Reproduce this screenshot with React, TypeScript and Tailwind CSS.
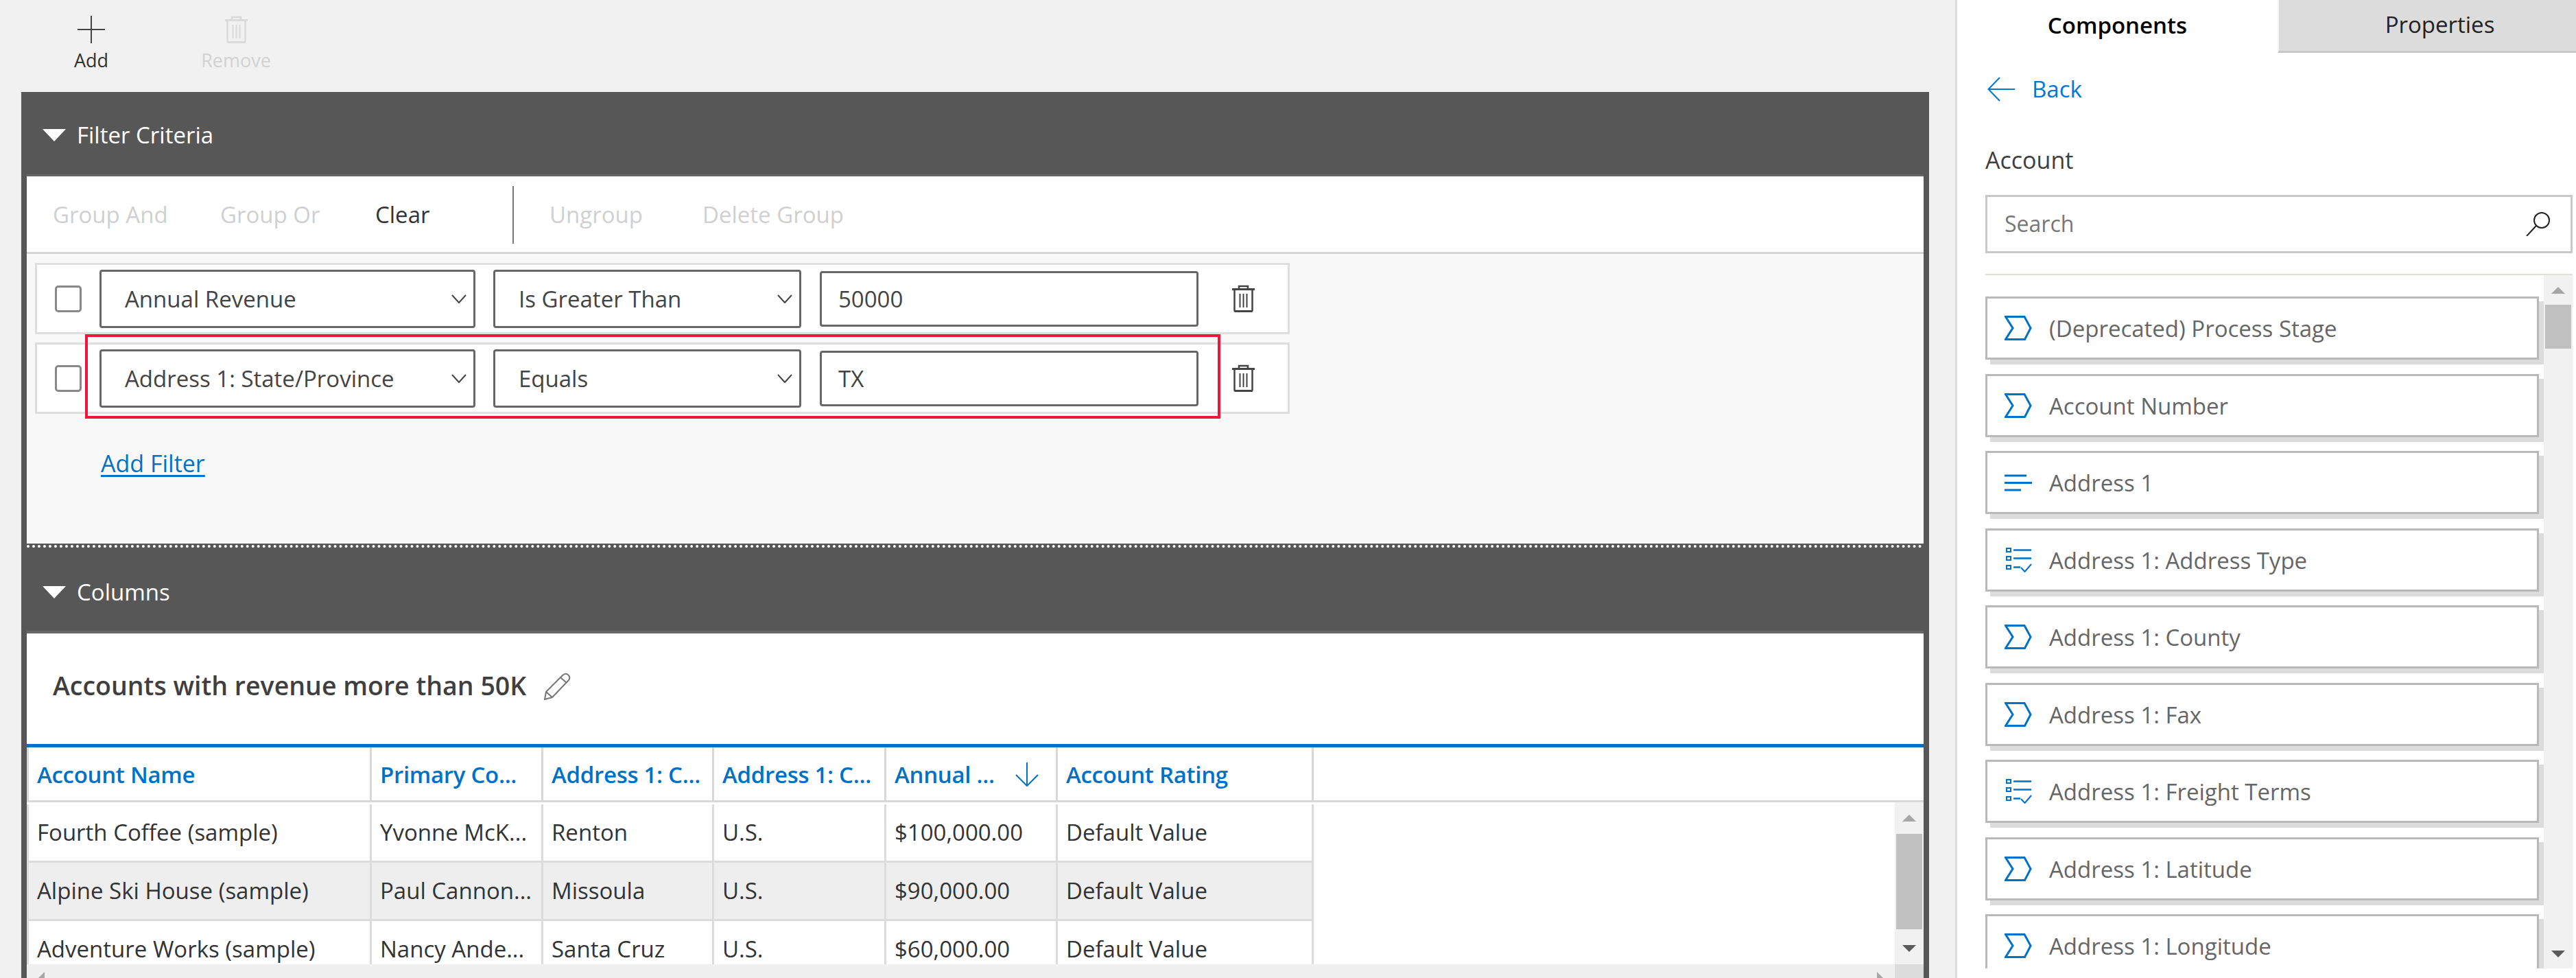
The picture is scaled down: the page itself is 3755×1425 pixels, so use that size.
import { ReactNode } from 'react';

const columns = [
  { label: 'Account Name', width: 'w-[500px]' },
  { label: 'Primary Co...', width: 'w-[250px]' },
  { label: 'Address 1: C...', width: 'w-[249px]' },
  { label: 'Address 1: C...', width: 'w-[251px]' },
  { label: 'Annual ...', width: 'w-[250px]', sorted: true },
  { label: 'Account Rating', width: 'w-[373px]' },
];

const rows = [
  ['Fourth Coffee (sample)', 'Yvonne McK...', 'Renton', 'U.S.', '$100,000.00', 'Default Value'],
  ['Alpine Ski House (sample)', 'Paul Cannon...', 'Missoula', 'U.S.', '$90,000.00', 'Default Value'],
  ['Adventure Works (sample)', 'Nancy Ande...', 'Santa Cruz', 'U.S.', '$60,000.00', 'Default Value'],
];

const fields = [
  { label: '(Deprecated) Process Stage', icon: 'field' },
  { label: 'Account Number', icon: 'field' },
  { label: 'Address 1', icon: 'text' },
  { label: 'Address 1: Address Type', icon: 'option' },
  { label: 'Address 1: County', icon: 'field' },
  { label: 'Address 1: Fax', icon: 'field' },
  { label: 'Address 1: Freight Terms', icon: 'option' },
  { label: 'Address 1: Latitude', icon: 'field' },
  { label: 'Address 1: Longitude', icon: 'field' },
];

function TrashIcon({ color }: { color: string }) {
  return (
    <svg width="33" height="40" viewBox="0 0 33 40" fill="none" stroke={color} strokeWidth="2.5">
      <path d="M10 6V2h13v4" />
      <path d="M0 6.5h33" strokeWidth="3" />
      <path d="M3.5 6.5V37q0 1.5 1.5 1.5h23q1.5 0 1.5-1.5V6.5" />
      <path d="M3.5 38.5h26" strokeWidth="3" />
      <path d="M11.5 13v20M16.500 13v20M21.500 13v20" strokeWidth="2" />
    </svg>
  );
}

function Triangle({ up, color, w = 20, h = 10 }: { up?: boolean; color: string; w?: number; h?: number }) {
  return (
    <svg width={w} height={h} viewBox="0 0 20 10" preserveAspectRatio="none" fill={color}>
      <path d={up ? 'M10 0L20 10H0Z' : 'M0 0H20L10 10Z'} />
    </svg>
  );
}

function FieldIcon({ type }: { type: string }) {
  if (type === 'text') {
    return (
      <svg width="40" height="36" viewBox="0 0 40 36" fill="none" stroke="#0072c6" strokeWidth="3">
        <path d="M0 8h32M0 18.500h40M0 29h24" />
      </svg>
    );
  }
  if (type === 'option') {
    return (
      <svg width="40" height="36" viewBox="0 0 40 36" fill="none" stroke="#0072c6" strokeWidth="2">
        <rect x="3" y="1" width="6" height="5" />
        <rect x="3" y="13" width="6" height="5" />
        <rect x="3" y="26" width="6" height="5" />
        <path d="M13 3.500h26M13 15.500h26M13 28.500h10" strokeWidth="2.5" />
        <path d="M24 29l5.500 6L39 24" />
      </svg>
    );
  }
  return (
    <svg width="40" height="36" viewBox="0 0 40 36" fill="none" stroke="#0072c6" strokeWidth="3">
      <path d="M1.500 1.500H29L38 18l-8.500 16.500H1.500L12 18Z" />
    </svg>
  );
}

function SectionHeader({ title, height }: { title: string; height: string }) {
  return (
    <div className={`flex ${height} items-center gap-[16px] pl-[23px] pt-[6px] text-[33px] text-white`}>
      <Triangle color="#ffffff" w={34} h={18} />
      <span>{title}</span>
    </div>
  );
}

function SelectBox({ width, children }: { width: string; children: ReactNode }) {
  return (
    <div className={`flex h-[85px] ${width} items-center justify-between rounded-[4px] border-[3px] border-[#666666] bg-white pl-[34px] pr-[10px] text-[33px] text-[#444444]`}>
      <span className="pt-[2px]">{children}</span>
      <svg width="22" height="13" viewBox="0 0 22 13" fill="none" stroke="#444444" strokeWidth="2">
        <path d="M1 1l10 11L21 1" />
      </svg>
    </div>
  );
}

function FilterRow({ field, op, value, className }: { field: string; op: string; value: string; className?: string }) {
  return (
    <div className={`ml-[12px] flex h-[104px] w-[1829px] items-center border-[3px] border-[#dedede] bg-white pl-[26px] ${className ?? ''}`}>
      <div className="h-[39px] w-[39px] rounded-[5px] border-[3px] border-[#888888] bg-white" />
      <div className="ml-[26px]">
        <SelectBox width="w-[548px]">{field}</SelectBox>
      </div>
      <div className="ml-[26px]">
        <SelectBox width="w-[449px]">{op}</SelectBox>
      </div>
      <div className="ml-[27px] flex h-[81px] w-[552px] items-center rounded-[4px] border-[3px] border-[#666666] pl-[24px] pt-[2px] text-[33px] text-[#444444]">
        {value}
      </div>
      <div className="ml-[49px] flex">
        <TrashIcon color="#444444" />
      </div>
    </div>
  );
}

function ScrollTrack({ thumbTop, thumbHeight, trackClass, thumbClass }: { thumbTop: string; thumbHeight: string; trackClass: string; thumbClass: string }) {
  return (
    <div className={`flex shrink-0 flex-col items-center bg-[#f1f1f1] ${trackClass}`}>
      <div className={`flex w-full justify-center ${thumbTop}`}>
        <Triangle up color="#a6a6a6" />
      </div>
      <div className={`${thumbHeight} ${thumbClass} bg-[#c0c0c0]`} />
      <div className="flex flex-1 items-center justify-center pt-[4px]">
        <Triangle color="#5a5a5a" />
      </div>
    </div>
  );
}

function MainArea() {
  return (
    <div className="h-[1425px] w-[2850px] shrink-0 pl-[31px] pr-[38px]">
      {/* Toolbar */}
      <div className="flex h-[134px] items-start pt-[23px] text-[27px]">
        <div className="ml-[22px] flex w-[160px] flex-col items-center text-[#333333]">
          <svg width="40" height="40" viewBox="0 0 40 40" stroke="#444444" strokeWidth="2">
            <path d="M20 0v40M0 20h40" />
          </svg>
          <span className="mt-[6px] leading-[38px]">Add</span>
        </div>
        <div className="ml-[51px] flex w-[160px] flex-col items-center text-[#d2d2d2]">
          <TrashIcon color="#dadada" />
          <span className="mt-[6px] leading-[38px]">Remove</span>
        </div>
      </div>

      {/* Panels */}
      <div className="bg-[#575757] px-[8px]">
        <SectionHeader title="Filter Criteria" height="h-[120px]" />
        <div className="border-t-[3px] border-[#666666]">
          <div className="flex h-[113px] items-center border-b-[3px] border-[#d4d4d4] bg-white pl-[38px] pt-[2px] text-[33px] text-[#d0d0d0]">
            <span className="w-[244px]">Group And</span>
            <span className="w-[226px]">Group Or</span>
            <span className="w-[200px] text-[#333333]">Clear</span>
            <div className="h-[84px] w-[2px] bg-[#777777]" />
            <span className="ml-[52px] w-[223px]">Ungroup</span>
            <span>Delete Group</span>
          </div>
          <div className="relative h-[422px] bg-[#f8f8f8] pt-[13px]">
            <FilterRow field="Annual Revenue" op="Is Greater Than" value="50000" />
            <FilterRow field="Address 1: State/Province" op="Equals" value="TX" className="mt-[12px]" />
            {/* red highlight callout */}
            <div className="absolute left-[85px] top-[117px] h-[123px] w-[1655px] border-[4px] border-[#ee1639]" />
            <div className="ml-[108px] mt-[49px] text-[34px] font-medium leading-[46px] text-[#0072c6] underline decoration-[3px] underline-offset-[4px]">
              Add Filter
            </div>
          </div>
        </div>

        <div className="flex h-[8px] items-center">
          <div className="w-full border-t-[4px] border-dotted border-white" />
        </div>

        <SectionHeader title="Columns" height="h-[119px]" />
        <div className="border-t-[4px] border-[#666666] bg-white">
          <div className="flex h-[161px] items-center pb-[8px] pl-[38px]">
            <span className="text-[37.500px] font-semibold text-[#3f3f3f]">Accounts with revenue more than 50K</span>
            <svg className="ml-[26px]" width="39" height="40" viewBox="0 0 39 40" fill="none" stroke="#777777" strokeWidth="2">
              <path d="M1 39l2-11L27 4q4-4 8-1 4 4 1 8L12 36ZM3 28l9 8M24 7l9 8" />
            </svg>
          </div>
          <div className="h-[5px] bg-[#0072c6]" />

          <div className="flex h-[80px] border-b-[3px] border-[#d8d8d8]">
            {columns.map((col, i) => (
              <div key={i} className={`flex ${col.width} items-center justify-between whitespace-nowrap border-l-[3px] border-[#d8d8d8] pl-[12px] pr-[25px] pt-[2px] text-[33px] font-semibold tracking-[-0.3px] text-[#0072c6]`}>
                <span>{col.label}</span>
                {col.sorted && (
                  <svg width="34" height="35" viewBox="0 0 34 35" fill="none" stroke="#0072c6" strokeWidth="2">
                    <path d="M17 0v34M1 18l16 16 16-16" />
                  </svg>
                )}
              </div>
            ))}
            <div className="border-l-[3px] border-[#d8d8d8]" />
          </div>

          <div className="flex h-[236px]">
            <div className="flex-1 overflow-hidden pt-[3px]">
              {rows.map((row, r) => (
                <div key={r} className={`flex h-[85px] w-[1876px] border-b-[3px] border-[#dcdcdc] ${r === 1 ? 'bg-[#eeeeee]' : 'bg-white'}`}>
                  {row.map((cell, c) => (
                    <div key={c} className={`flex ${columns[c].width} items-center whitespace-nowrap border-l-[3px] border-[#dcdcdc] pl-[12px] text-[33px] text-[#333333]`}>
                      {cell}
                    </div>
                  ))}
                  <div className="border-l-[3px] border-[#dcdcdc]" />
                </div>
              ))}
            </div>
            <ScrollTrack thumbTop="py-[18px]" thumbHeight="h-[139px]" trackClass="w-[42px]" thumbClass="w-[38px]" />
          </div>

          {/* Horizontal scrollbar, cut by the window */}
          <div className="flex h-[20px] overflow-hidden">
            <div className="flex flex-1 items-start justify-between bg-[#f0f0f0] pl-[17px] pr-[17px] pt-[11px]">
              <svg width="9" height="9" viewBox="0 0 9 9" fill="#a6a6a6"><path d="M9 0V9H0Z" /></svg>
              <svg width="9" height="9" viewBox="0 0 9 9" fill="#a6a6a6"><path d="M0 0L9 9H0Z" /></svg>
            </div>
            <div className="w-[42px] bg-[#dcdcdc]" />
          </div>
        </div>
      </div>
    </div>
  );
}

function SidePanel() {
  return (
    <div className="h-[1425px] w-[905px] shrink-0 border-l-[3px] border-[#dcdcdc] bg-white">
      <div className="flex h-[77px]">
        <div className="flex w-[467px] items-center justify-center pb-[4px] text-[33px] font-semibold text-black">Components</div>
        <div className="flex flex-1 items-center justify-center border-b-[3px] border-l-[2px] border-b-[#c8c8c8] border-l-[#f4f4f4] bg-[#dcdcdc] pb-[2px] pl-[36px] text-[33px] text-[#222222]">
          Properties
        </div>
      </div>
      <div className="pl-[41px]">
        <div className="mt-[26px] flex h-[54px] items-center pl-[3px] text-[33px] font-medium text-[#0078d4]">
          <svg width="40" height="36" viewBox="0 0 40 36" fill="none" stroke="#0078d4" strokeWidth="2">
            <path d="M18 1L1.500 18 18 35M1.500 18H40" />
          </svg>
          <span className="ml-[25px]">Back</span>
        </div>
        <div className="mt-[51px] flex h-[50px] items-center text-[34px] font-medium text-[#3f3f3f]">Account</div>
        <div className="mt-[26px] flex h-[85px] w-[856px] items-center justify-between border-[3px] border-[#c8c8c8] pl-[25px] pr-[30px] text-[32px] text-[#777777]">
          <span className="pb-[2px]">Search</span>
          <svg width="35" height="35" viewBox="0 0 35 35" fill="none" stroke="#222222" strokeWidth="2">
            <circle cx="23" cy="12" r="11" />
            <path d="M15 20L1 35" />
          </svg>
        </div>
        <div className="mt-[30px] h-[2px] w-[856px] bg-[#e0e0d8]" />
        <div className="flex h-[1010px]">
          <div className="w-[814px] overflow-hidden pt-[31px]">
            {fields.map((f) => (
              <div key={f.label} className="mb-[20.5px] flex h-[92px] w-[807px] items-center border-[3px] border-[#b9b9b9] bg-white pl-[25px] text-[33px] text-[#666666] shadow-[7px_7px_0_#dcdcdc]">
                <FieldIcon type={f.icon} />
                <span className="ml-[25px] pt-[2px]">{f.label}</span>
              </div>
            ))}
          </div>
          <div className="relative flex w-[42px] flex-col items-center bg-[#f1f1f1]">
            <div className="pb-[16px] pt-[17px]">
              <Triangle up color="#a6a6a6" />
            </div>
            <div className="h-[64px] w-[38px] bg-[#c0c0c0]" />
            {/* down arrow sits at the bottom of the track */}
            <div className="absolute bottom-[16px]">
              <Triangle color="#5a5a5a" />
            </div>
          </div>
        </div>
      </div>
    </div>
  );
}

export default function App() {
  return (
    <div className="flex h-[1425px] w-[3755px] overflow-hidden bg-[#f1f1f1] font-['Open_Sans',sans-serif]">
      <MainArea />
      <SidePanel />
    </div>
  );
}
